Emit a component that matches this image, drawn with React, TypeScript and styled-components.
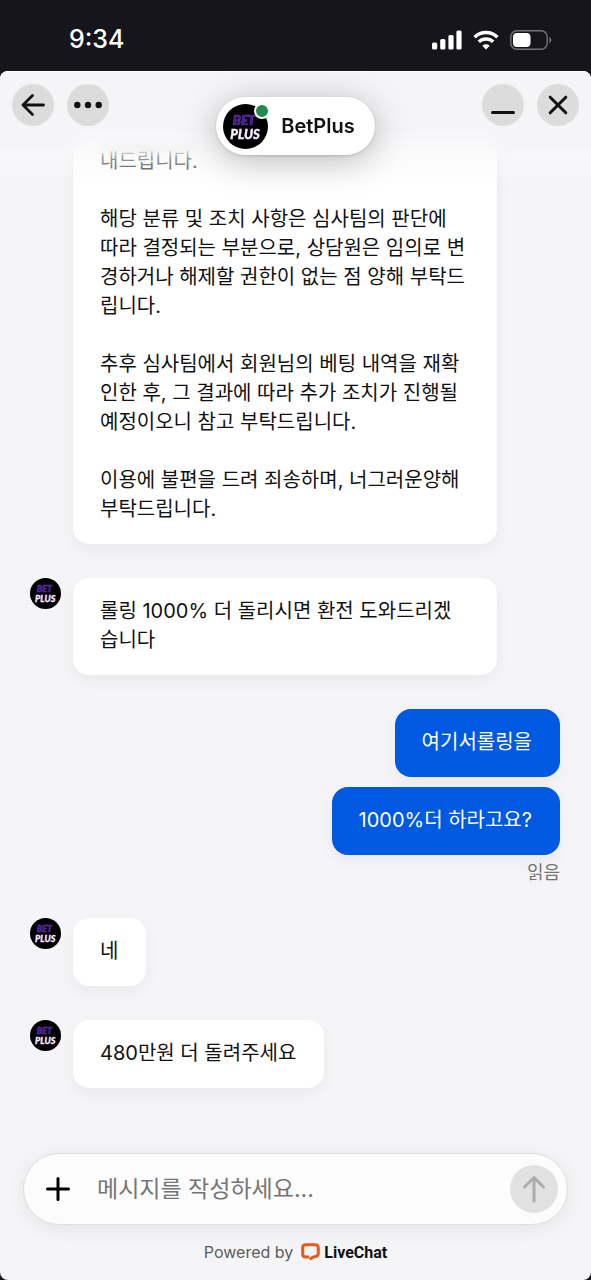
import React from "react";
import styled, { createGlobalStyle } from "styled-components";

const GlobalStyle = createGlobalStyle`
  *, *::before, *::after { box-sizing: border-box; }
  body {
    margin: 0;
    background: #16151c;
    color: #111;
    font-family: Inter, "Noto Sans CJK KR", sans-serif;
    font-size: 20px;
    line-height: 29px;
  }
  button, input { font: inherit; color: inherit; margin: 0; padding: 0; border: 0; background: none; }
`;

const Screen = styled.div`
  display: flex;
  flex-direction: column;
  min-height: 100vh;
`;

const StatusBar = styled.div`
  display: flex;
  align-items: center;
  justify-content: space-between;
  height: 71px;
  padding: 8px 39px 0 69px;
  color: #fff;
`;

const Clock = styled.time`
  font-size: 25px;
  font-weight: 500;
`;

const StatusIcons = styled.div`
  display: flex;
  align-items: center;
  gap: 11px;
`;

const Panel = styled.main`
  position: relative;
  flex: 1;
  display: flex;
  flex-direction: column;
  overflow: hidden;
  border-radius: 8px;
  background: #f5f5f8;
  box-shadow: inset 0 1px 0 #fff;
`;

const Header = styled.header`
  position: absolute;
  inset: 0 0 auto;
  display: flex;
  align-items: flex-start;
  justify-content: space-between;
  padding: 13px 12px 0;
`;

const HeaderBlur = styled.div`
  position: absolute;
  inset: 1px 0 auto;
  height: 86px;
  backdrop-filter: blur(8px);
  background: linear-gradient(rgba(245, 245, 248, 1) 64%, rgba(245, 245, 248, 0.3));
  mask-image: linear-gradient(#000 90%, transparent);
`;

const HeaderFade = styled.div`
  position: absolute;
  inset: 1px 0 auto;
  height: 114px;
  background: linear-gradient(
    rgba(249, 249, 251, 0) 64%,
    rgba(249, 249, 251, 0.65) 72%,
    rgba(249, 249, 251, 0.35) 88%,
    rgba(249, 249, 251, 0)
  );
`;

const HeaderGroup = styled.div`
  display: flex;
  gap: 13px;
`;

const RoundButton = styled.button`
  display: flex;
  align-items: center;
  justify-content: center;
  width: 42px;
  height: 42px;
  border-radius: 50%;
  background: #dcdcdd;
`;

const AgentPill = styled.div`
  display: flex;
  align-items: center;
  gap: 13px;
  height: 58px;
  margin-top: 13px;
  padding: 0 20px 0 7px;
  border-radius: 29px;
  background: #fff;
  box-shadow: 0 1px 3px rgba(0, 0, 0, 0.16), 0 6px 36px rgba(0, 0, 0, 0.26);
`;

const AgentName = styled.h1`
  margin: 0;
  font-size: 20px;
  font-weight: 600;
`;

const AvatarWrap = styled.span`
  position: relative;
  display: flex;
`;

const OnlineDot = styled.span`
  position: absolute;
  top: -1px;
  right: -2px;
  width: 16px;
  height: 16px;
  border: 2px solid #fff;
  border-radius: 50%;
  background: #24894f;
`;

const Messages = styled.section`
  flex: 1;
  display: flex;
  flex-direction: column;
  gap: 34px;
  padding: 57px 31px 64px 30px;
`;

const AgentRow = styled.div`
  display: flex;
  align-items: flex-start;
  gap: 12px;
`;

const AvatarSlot = styled.div`
  flex: none;
  display: flex;
  width: 31px;
`;

const CustomerGroup = styled.div`
  display: flex;
  flex-direction: column;
  align-items: flex-end;
  gap: 10px;
`;

const Bubble = styled.p<{ $own?: boolean }>`
  max-width: 80%;
  margin: 0;
  padding: 19px 28px 20px 27px;
  border-radius: 16px;
  background: ${(p) => (p.$own ? "#0059e1" : "#fff")};
  color: ${(p) => (p.$own ? "#fff" : "#111")};
  white-space: pre-line;
  box-shadow: 0 6px 16px rgba(0, 0, 0, 0.05);
`;

const ReadMark = styled.span`
  margin: -7px 0 -3px;
  color: #737373;
  font-size: 18px;
`;

const Footer = styled.footer`
  display: flex;
  flex-direction: column;
  align-items: center;
  gap: 13px;
  padding: 0 23px;
`;

const Composer = styled.form`
  display: flex;
  align-items: center;
  align-self: stretch;
  height: 72px;
  padding: 0 9px 0 12px;
  border: 1px solid #dedee0;
  border-radius: 36px;
  background: #fcfcfc;
  box-shadow: 0 4px 20px rgba(0, 0, 0, 0.07);
`;

const AttachButton = styled.button`
  display: flex;
  align-items: center;
  justify-content: center;
  width: 44px;
  height: 44px;
`;

const MessageInput = styled.input`
  flex: 1;
  min-width: 0;
  padding-left: 17px;
  font-size: 23px;
  outline: none;
  &::placeholder { color: #757575; opacity: 1; }
`;

const SendButton = styled.button`
  display: flex;
  align-items: center;
  justify-content: center;
  width: 48px;
  height: 48px;
  border-radius: 50%;
  background: #e1e1e1;
`;

const Powered = styled.div`
  display: flex;
  align-items: center;
  gap: 8px;
  padding-bottom: 13px;
  color: #5c5c5c;
  font-size: 16px;
`;

const Brand = styled.a`
  display: flex;
  align-items: center;
  gap: 4px;
  color: #111;
  font-family: Roboto, sans-serif;
  font-weight: 700;
  text-decoration: none;
`;

function Logo({ size }: { size: number }) {
  return (
    <svg width={size} height={size} viewBox="0 0 45 45" role="img" aria-label="BetPlus">
      <circle cx="22.5" cy="22.5" r="22.5" fill="#000" />
      <g fontFamily="Lato, sans-serif" fontWeight="900" fontStyle="italic" textAnchor="middle">
        <text x="21" y="21" fontSize="13" fill="#3c1d80" stroke="#6a35b8" strokeWidth="0.7">BET</text>
        <text x="22" y="34.5" fontSize="13" fill="#fff" stroke="#e3c8fb" strokeWidth="0.5">PLUS</text>
      </g>
    </svg>
  );
}

function AgentMessage({ text }: { text: string }) {
  return (
    <AgentRow>
      <AvatarSlot><Logo size={31} /></AvatarSlot>
      <Bubble>{text}</Bubble>
    </AgentRow>
  );
}

const notice = `내드립니다.

해당 분류 및 조치 사항은 심사팀의 판단에 따라 결정되는 부분으로, 상담원은 임의로 변경하거나 해제할 권한이 없는 점 양해 부탁드립니다.

추후 심사팀에서 회원님의 베팅 내역을 재확인한 후, 그 결과에 따라 추가 조치가 진행될 예정이오니 참고 부탁드립니다.

이용에 불편을 드려 죄송하며, 너그러운양해 부탁드립니다.`;

export default function App() {
  return (
    <Screen>
      <GlobalStyle />
      <StatusBar>
        <Clock>9:34</Clock>
        <StatusIcons>
          <svg width="30" height="20" viewBox="0 0 30 20" fill="#fff">
            <rect x="0" y="12.5" width="5.2" height="7" rx="1.5" />
            <rect x="8.2" y="9" width="5.2" height="10.5" rx="1.5" />
            <rect x="16.4" y="5" width="5.2" height="14.5" rx="1.5" />
            <rect x="24.4" y="0.5" width="5.2" height="19" rx="1.5" />
          </svg>
          <svg width="26" height="20" viewBox="0 0 26 20" fill="none" stroke="#fff" strokeWidth="3.5">
            <path d="M1.6 7.2a16.3 16.3 0 0 1 22.8 0" />
            <path d="M5.8 11.8a10.4 10.4 0 0 1 14.4 0" />
            <path d="M13 19.5l-3.7-3.8a5.4 5.4 0 0 1 7.4 0z" fill="#fff" stroke="none" />
          </svg>
          <svg width="42" height="20" viewBox="0 0 42 20" fill="none">
            <rect x="0.8" y="0.8" width="36.4" height="18.4" rx="6" stroke="#74737a" strokeWidth="1.4" />
            <rect x="3" y="3" width="17.5" height="14" rx="4" fill="#fff" />
            <path d="M39.3 7v6c1.2-.4 2-1.6 2-3s-.8-2.6-2-3z" fill="#74737a" />
          </svg>
        </StatusIcons>
      </StatusBar>

      <Panel>
        <Messages>
          <AgentRow>
            <AvatarSlot />
            <Bubble>{notice}</Bubble>
          </AgentRow>
          <AgentMessage text="롤링 1000% 더 돌리시면 환전 도와드리겠습니다" />
          <CustomerGroup>
            <Bubble $own>여기서롤링을</Bubble>
            <Bubble $own>1000%더 하라고요?</Bubble>
            <ReadMark>읽음</ReadMark>
          </CustomerGroup>
          <AgentMessage text="네" />
          <AgentMessage text="480만원 더 돌려주세요" />
        </Messages>

        <HeaderBlur />
        <HeaderFade />
        <Header>
          <HeaderGroup>
            <RoundButton aria-label="뒤로">
              <svg width="24" height="24" viewBox="0 0 24 24" fill="none" stroke="#111" strokeWidth="2.8" strokeLinecap="round" strokeLinejoin="round">
                <path d="M22.5 12H2M11.5 2.5L2 12l9.5 9.5" />
              </svg>
            </RoundButton>
            <RoundButton aria-label="메뉴">
              <svg width="28" height="8" viewBox="0 0 28 8" fill="#111">
                <circle cx="3.3" cy="4" r="3.2" />
                <circle cx="14" cy="4" r="3.2" />
                <circle cx="24.7" cy="4" r="3.2" />
              </svg>
            </RoundButton>
          </HeaderGroup>
          <AgentPill>
            <AvatarWrap>
              <Logo size={45} />
              <OnlineDot />
            </AvatarWrap>
            <AgentName>BetPlus</AgentName>
          </AgentPill>
          <HeaderGroup>
            <RoundButton aria-label="최소화">
              <svg width="24" height="24" viewBox="0 0 24 24" fill="none" stroke="#111" strokeWidth="3" strokeLinecap="round">
                <path d="M1.5 19.5h21" />
              </svg>
            </RoundButton>
            <RoundButton aria-label="닫기">
              <svg width="24" height="24" viewBox="0 0 24 24" fill="none" stroke="#111" strokeWidth="3" strokeLinecap="round">
                <path d="M4.2 4.2l15.6 15.6M19.8 4.2L4.2 19.8" />
              </svg>
            </RoundButton>
          </HeaderGroup>
        </Header>

        <Footer>
          <Composer onSubmit={(e) => e.preventDefault()}>
            <AttachButton type="button" aria-label="첨부">
              <svg width="24" height="24" viewBox="0 0 24 24" fill="none" stroke="#000" strokeWidth="3" strokeLinecap="round">
                <path d="M12 1.5v21M1.5 12h21" />
              </svg>
            </AttachButton>
            <MessageInput type="text" aria-label="메시지" placeholder="메시지를 작성하세요..." />
            <SendButton type="submit" aria-label="보내기">
              <svg width="24" height="28" viewBox="0 0 24 28" fill="none" stroke="#acacac" strokeWidth="3" strokeLinecap="round" strokeLinejoin="round">
                <path d="M12 26V3M2.5 12L12 2.5l9.5 9.5" />
              </svg>
            </SendButton>
          </Composer>
          <Powered>
            Powered by
            <Brand href="#">
              <svg width="19" height="19" viewBox="0 0 19 19" fill="none" stroke="#e8591c" strokeWidth="3">
                <path d="M8.2 13.9H4.7c-2 0-3-1-3-3V4.7c0-2 1-3 3-3h9.6c2 0 3 1 3 3v5.500c0 2-.9 3-2.800 3.300-2.100.3-3.900 1.200-5.700 3" />
              </svg>
              LiveChat
            </Brand>
          </Powered>
        </Footer>
      </Panel>
    </Screen>
  );
}
